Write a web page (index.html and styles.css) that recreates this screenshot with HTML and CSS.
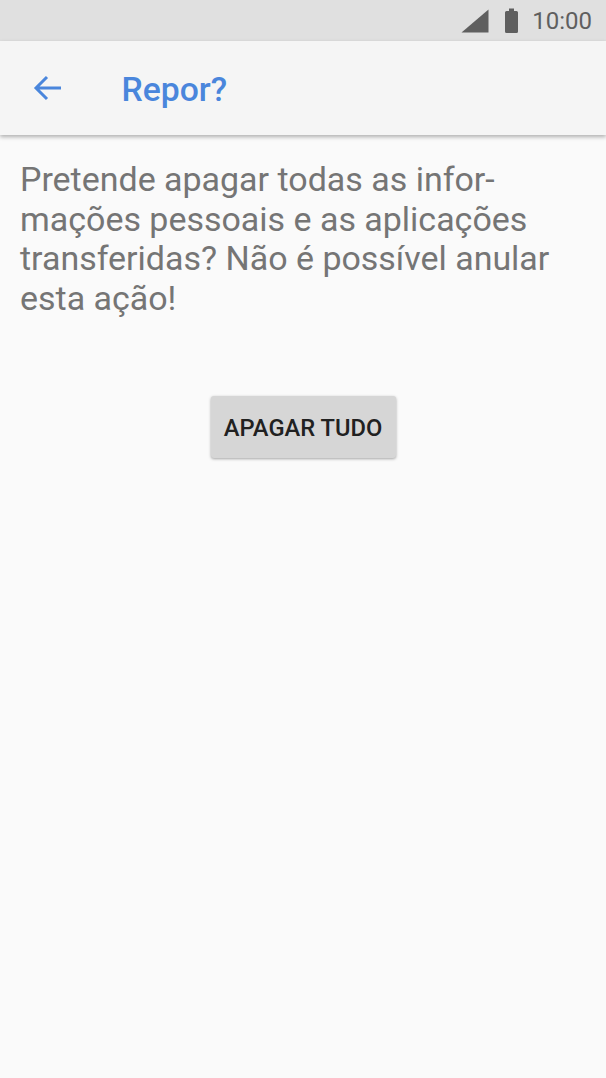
FILE: index.html
```html
<!DOCTYPE html>
<html lang="pt">
<head>
<meta charset="utf-8">
<title>Repor?</title>
<link rel="stylesheet" href="styles.css">
</head>
<body>
<div class="status">
  <svg class="signal" width="28" height="24" viewBox="0 0 28 24"><path d="M0.500 23.500 L27.500 0.500 V23.500 Z" fill="#5f5f5f"/></svg>
  <svg class="battery" width="15" height="26" viewBox="0 0 15 26"><path d="M5 0.500 H10 V3 H12.500 Q14 3 14 4.500 V23.500 Q14 25 12.500 25 H2.500 Q1 25 1 23.500 V4.500 Q1 3 2.500 3 H5 Z" fill="#5f5f5f"/></svg>
  <span class="time">10:00</span>
</div>
<header class="bar">
  <svg class="back" width="30" height="28" viewBox="0 0 30 28"><path d="M29 14 H4 M15 3 L4 14 L15 25" fill="none" stroke="#4a86dc" stroke-width="3"/></svg>
  <h1 class="title">Repor?</h1>
</header>
<main class="content">
  <p class="msg">Pretende apagar todas as infor-<br>mações pessoais e as aplicações<br>transferidas? Não é possível anular<br>esta ação!</p>
  <div class="actions"><button class="btn">APAGAR TUDO</button></div>
</main>
</body>
</html>
```
FILE: styles.css
```css
html, body { margin: 0; padding: 0; height: 100%; overflow: hidden; }
body { background: #fafafa; font-family: Roboto, sans-serif; }
.status { height: 41px; background: #e0e0e0; display: flex; align-items: center; justify-content: flex-end; padding-right: 14px; box-sizing: border-box; }
.signal { margin-right: 15px; }
.battery { margin-right: 13px; }
.time { font-size: 24px; color: #5f5f5f; }
.bar { height: 94px; background: #f5f5f5; display: flex; align-items: center; box-sizing: border-box; padding-left: 32px; box-shadow: 0 2px 4px rgba(0,0,0,0.3); }
.title { margin: 2px 0 0 59.500px; font-size: 33.700px; font-weight: 500; color: #4a86dc; }
.content { padding: 25px 20px 0; }
.msg { margin: 0; font-size: 33.960px; line-height: 39.500px; color: #757575; }
.actions { display: flex; justify-content: center; margin-top: 78px; }
.btn { width: 185px; height: 62px; border: 0; border-radius: 3px; background: #d6d6d6; color: #212121; font-family: Roboto, sans-serif; font-size: 23.700px; font-weight: 500; box-shadow: 0 1px 3px rgba(0,0,0,0.35); padding: 2px 0 0; }
```
